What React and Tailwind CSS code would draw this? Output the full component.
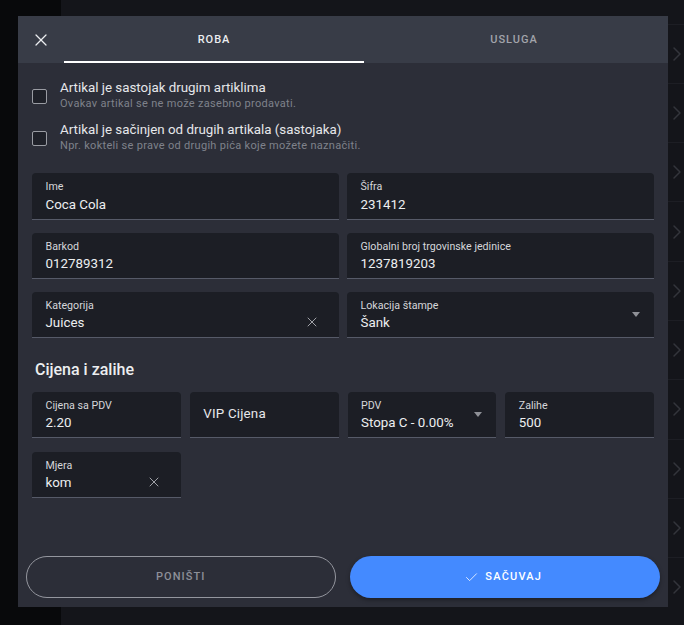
import { Check, ChevronRight, X } from "lucide-react"

const rows = [0, 1, 2, 3, 4, 5, 6, 7, 8, 9]

function Field({ label, value, clear, select }) {
  return (
    <div className="relative h-[46.33px] rounded-t-[4px] border-b border-[#565a68] bg-[#1c1e25] px-[13.5px] pt-[8px]">
      <div className="text-[10.67px] leading-[12px] text-[#d5d6da]">{label}</div>
      <div className="mt-[1.4px] text-[13.33px] leading-[20px] text-[#eceef0]">{value}</div>
      {clear && <X size={16} strokeWidth={1.5} className="absolute right-[19px] top-[22px] text-[#a0a2a8]" />}
      {select && (
        <div className="absolute right-[14px] top-[20px] h-0 w-0 border-x-[4.5px] border-t-[5px] border-x-transparent border-t-[#8f9197]" />
      )}
    </div>
  )
}

function CheckRow({ title, hint }) {
  return (
    <div className="flex items-center gap-[13px]">
      <div className="mt-[4px] h-[15px] w-[15px] rounded-[2px] border border-[#9a9ca3] bg-[#1f2129]" />
      <div>
        <div className="text-[13.35px] leading-[17px] text-[#e6e7ea]">{title}</div>
        <div className="text-[11px] leading-[15px] tracking-[0.3px] text-[#7f828b]">{hint}</div>
      </div>
    </div>
  )
}

export default function App() {
  return (
    <div className="relative flex h-[625px] w-[684px] overflow-hidden bg-[#14151a] font-['Roboto',sans-serif]">
      <div className="h-full w-[61px] bg-[#08090b]" />
      <div className="flex-1 pt-[23.5px]">
        {rows.map((i) => (
          <div key={i} className="flex h-[59.3px] items-center justify-end border-t border-[#1d1e24]">
            <ChevronRight size={24} strokeWidth={1.5} className="mr-[-5px] text-[#33353b]" />
          </div>
        ))}
      </div>

      <div className="absolute left-[18px] top-[16px] flex h-[591px] w-[650px] flex-col bg-[#2c2e38]">
        <div className="flex h-[47px] bg-[#383c47]">
          <div className="flex w-[46px] items-center justify-center">
            <X size={20} strokeWidth={1.5} className="text-[#eceef0]" />
          </div>
          <div className="flex w-[300px] items-center justify-center border-b-2 border-white pt-[4px] text-[11px] font-medium tracking-[1px] text-[#eceef0]">
            ROBA
          </div>
          <div className="flex w-[300px] items-center justify-center pt-[2px] text-[11px] font-medium tracking-[1px] text-[#a2a4ab]">
            USLUGA
          </div>
        </div>

        <div className="flex-1 px-[14px]">
          <div className="flex flex-col gap-[10px] pt-[15.5px]">
            <CheckRow title="Artikal je sastojak drugim artiklima" hint="Ovakav artikal se ne može zasebno prodavati." />
            <CheckRow title="Artikal je sačinjen od drugih artikala (sastojaka)" hint="Npr. kokteli se prave od drugih pića koje možete naznačiti." />
          </div>

          <div className="mt-[20.9px] grid grid-cols-2 gap-x-[8px] gap-y-[13px]">
            <Field label="Ime" value="Coca Cola" />
            <Field label="Šifra" value="231412" />
            <Field label="Barkod" value="012789312" />
            <Field label="Globalni broj trgovinske jedinice" value="1237819203" />
            <Field label="Kategorija" value="Juices" clear />
            <Field label="Lokacija štampe" value="Šank" select />
          </div>

          <h2 className="mt-[21.5px] pl-[3px] text-[16px] leading-[20px] font-medium text-[#eceef0]">Cijena i zalihe</h2>

          <div className="mt-[12.1px] grid grid-cols-4 gap-x-[9px] gap-y-[13.5px]">
            <Field label="Cijena sa PDV" value="2.20" />
            <div className="flex h-[46.33px] items-center rounded-t-[4px] border-b border-[#565a68] bg-[#1c1e25] px-[13.5px] pb-[1px] text-[13.33px] tracking-[0.2px] text-[#e6e7ea]">
              VIP Cijena
            </div>
            <Field label="PDV" value="Stopa C - 0.00%" select />
            <Field label="Zalihe" value="500" />
            <Field label="Mjera" value="kom" clear />
          </div>
        </div>

        <div className="flex gap-[14px] px-[8px] pb-[9px]">
          <button className="h-[42px] flex-1 rounded-full border border-[#94969e] text-[11px] font-medium tracking-[1.1px] text-[#8e9098]">
            PONIŠTI
          </button>
          <button className="flex h-[42px] flex-1 items-center justify-center gap-[6px] rounded-full bg-[#448aff] pr-[3px] text-[11px] font-medium tracking-[1.2px] text-white shadow-[0_2px_4px_rgba(0,0,0,0.35)]">
            <Check size={15} strokeWidth={1.25} />
            SAČUVAJ
          </button>
        </div>
      </div>
    </div>
  )
}
